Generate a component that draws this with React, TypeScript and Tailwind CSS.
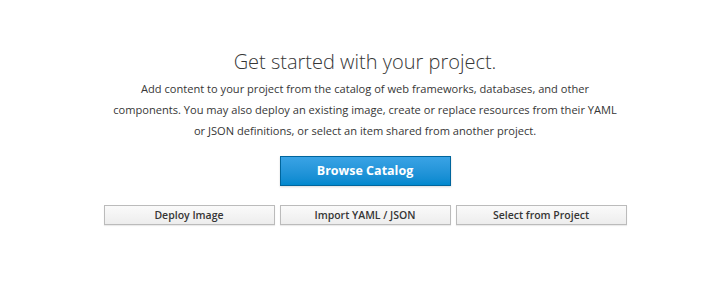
export default function App() {
  const actions = ["Deploy Image", "Import YAML / JSON", "Select from Project"];

  return (
    <div className="w-[720px] h-[302px] bg-white font-['Open_Sans',sans-serif] text-[#363636]">
      <div className="flex flex-col items-center pl-[10px] pt-[46px]">
        <h1 className="text-[20px] font-light leading-[32px] text-[#363636]">Get started with your project.</h1>
        <p className="text-center text-[11.1px] leading-[21px] whitespace-nowrap">
          Add content to your project from the catalog of web frameworks, databases, and other
          <br />
          components. You may also deploy an existing image, create or replace resources from their YAML
          <br />
          or JSON definitions, or select an item shared from another project.
        </p>
        <button className="mt-[15px] w-[171px] h-[30px] border border-[#00659c] bg-gradient-to-b from-[#39a3e5] to-[#0088ce] text-[12.5px] font-bold text-white shadow-[0_1px_2px_rgba(0,0,0,0.15)]">
          Browse Catalog
        </button>
        <div className="mt-[19px] flex gap-[5px]">
          {actions.map((a) => (
            <button
              key={a}
              className="w-[171px] h-[20px] border border-[#bbbbbb] bg-gradient-to-b from-[#fafafa] to-[#ededed] text-[10.5px] font-semibold leading-none text-[#363636] shadow-[0_1px_1px_rgba(0,0,0,0.08)]"
            >
              {a}
            </button>
          ))}
        </div>
      </div>
    </div>
  );
}
